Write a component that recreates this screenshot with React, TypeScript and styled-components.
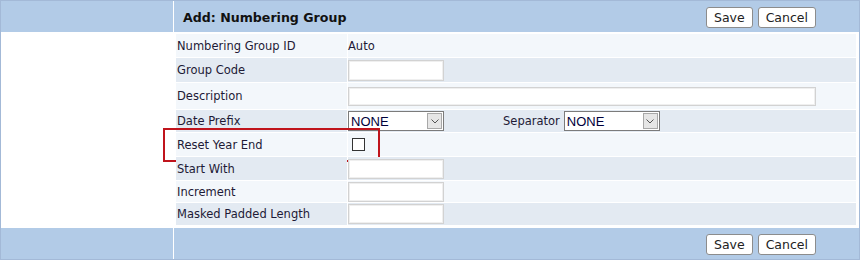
import React from 'react';
import styled, { createGlobalStyle } from 'styled-components';

const GlobalStyle = createGlobalStyle`
  body {
    margin: 0;
    background: #ffffff;
    font-family: 'DejaVu Sans', Verdana, sans-serif;
  }
`;

const Frame = styled.div`
  width: 860px;
  height: 260px;
  box-sizing: border-box;
  border: 1px solid #a3b9d7;
  background: #ffffff;
  display: grid;
  grid-template-columns: 172px 1fr;
  grid-template-rows: 31px 1fr 31px;
  column-gap: 1px;
`;

const Band = styled.div`
  background: #b2cbe7;
  display: flex;
  align-items: center;
`;

const ActionBar = styled(Band)<{ $title?: boolean }>`
  justify-content: ${(p) => (p.$title ? 'space-between' : 'flex-end')};
  padding: 1px 43px 0 9px;
`;

const Title = styled.h1`
  margin: 0;
  font-size: 12.6px;
  font-weight: bold;
  color: #111111;
`;

const Buttons = styled.div`
  display: flex;
  gap: 5px;
`;

const Button = styled.button`
  height: 21px;
  padding: 0 7px;
  border: 1px solid #8c8c8c;
  border-radius: 3px;
  background: #ffffff;
  font-family: 'DejaVu Sans', Verdana, sans-serif;
  font-size: 12.5px;
  color: #222222;
  line-height: 19px;
`;

const Blank = styled.div`
  background: #ffffff;
`;

const Body = styled.div`
  padding: 2px 3px 0 2px;
  display: flex;
  flex-direction: column;
  gap: 1px;
`;

const Row = styled.div<{ $h: number; $shade: boolean }>`
  position: relative;
  height: ${(p) => p.$h}px;
  display: grid;
  grid-template-columns: 171px 1fr;
  column-gap: 1px;
  & > div {
    background: ${(p) => (p.$shade ? '#e3eaf2' : '#f3f7fb')};
  }
`;

const Label = styled.div`
  display: flex;
  align-items: center;
  padding-left: 1px;
  font-size: 11.5px;
  color: #1e1a36;
`;

const Value = styled.div`
  display: flex;
  align-items: center;
  font-size: 11.5px;
  color: #1e1a36;
`;

const TextBox = styled.input<{ $w: number; $h?: number }>`
  width: ${(p) => p.$w}px;
  height: ${(p) => p.$h ?? 20}px;
  box-sizing: border-box;
  margin: 0;
  border: 1px solid #d2d2d2;
  box-shadow: inset 0 0 0 1px #efefef;
  background: #ffffff;
  outline: none;
`;

const Select = styled.div`
  width: 96px;
  height: 20px;
  box-sizing: border-box;
  border: 1px solid #7b7b7b;
  background: #ffffff;
  display: flex;
  align-items: center;
  font-family: 'Liberation Sans', Arial, sans-serif;
  font-size: 13px;
  color: #00003a;
`;

const SelectText = styled.span`
  flex: 1;
  padding-left: 2px;
`;

const Arrow = styled.span`
  width: 15px;
  height: 16px;
  box-sizing: border-box;
  margin-right: 1px;
  border: 1px solid #a8a8a8;
  background: #e6e6e6;
  display: flex;
  align-items: center;
  justify-content: center;
`;

const InlineLabel = styled.span`
  margin: 0 4px 0 59px;
`;

const CheckBox = styled.span`
  width: 13px;
  height: 13px;
  box-sizing: border-box;
  margin-left: 4px;
  border: 1px solid #333333;
  background: #ffffff;
`;

const Highlight = styled.span`
  position: absolute;
  left: -13px;
  top: -5px;
  width: 217px;
  height: 34px;
  box-sizing: border-box;
  border: 2px solid #c0141c;
  pointer-events: none;
`;

const Dropdown = ({ value }: { value: string }) => (
  <Select>
    <SelectText>{value}</SelectText>
    <Arrow>
      <svg width="8" height="5" viewBox="0 0 8 5">
        <path d="M0.5 0.5 L4 4 L7.5 0.5" fill="none" stroke="#555" strokeWidth="1" />
      </svg>
    </Arrow>
  </Select>
);

export default function App() {
  return (
    <>
      <GlobalStyle />
      <Frame>
        <Band />
        <ActionBar $title>
          <Title>Add: Numbering Group</Title>
          <Buttons>
            <Button>Save</Button>
            <Button>Cancel</Button>
          </Buttons>
        </ActionBar>

        <Blank />
        <Body>
          <Row $h={23} $shade={false}>
            <Label>Numbering Group ID</Label>
            <Value>Auto</Value>
          </Row>
          <Row $h={24} $shade>
            <Label>Group Code</Label>
            <Value>
              <TextBox $w={96} $h={21} />
            </Value>
          </Row>
          <Row $h={26} $shade={false}>
            <Label>Description</Label>
            <Value>
              <TextBox $w={468} $h={19} />
            </Value>
          </Row>
          <Row $h={22} $shade>
            <Label>Date Prefix</Label>
            <Value>
              <Dropdown value="NONE" />
              <InlineLabel>Separator</InlineLabel>
              <Dropdown value="NONE" />
            </Value>
          </Row>
          <Row $h={23} $shade={false}>
            <Label>Reset Year End</Label>
            <Value>
              <CheckBox />
            </Value>
            <Highlight />
          </Row>
          <Row $h={23} $shade>
            <Label>Start With</Label>
            <Value>
              <TextBox $w={96} />
            </Value>
          </Row>
          <Row $h={21} $shade={false}>
            <Label>Increment</Label>
            <Value>
              <TextBox $w={96} />
            </Value>
          </Row>
          <Row $h={22} $shade>
            <Label>Masked Padded Length</Label>
            <Value>
              <TextBox $w={96} />
            </Value>
          </Row>
        </Body>

        <Band />
        <ActionBar>
          <Buttons>
            <Button>Save</Button>
            <Button>Cancel</Button>
          </Buttons>
        </ActionBar>
      </Frame>
    </>
  );
}
